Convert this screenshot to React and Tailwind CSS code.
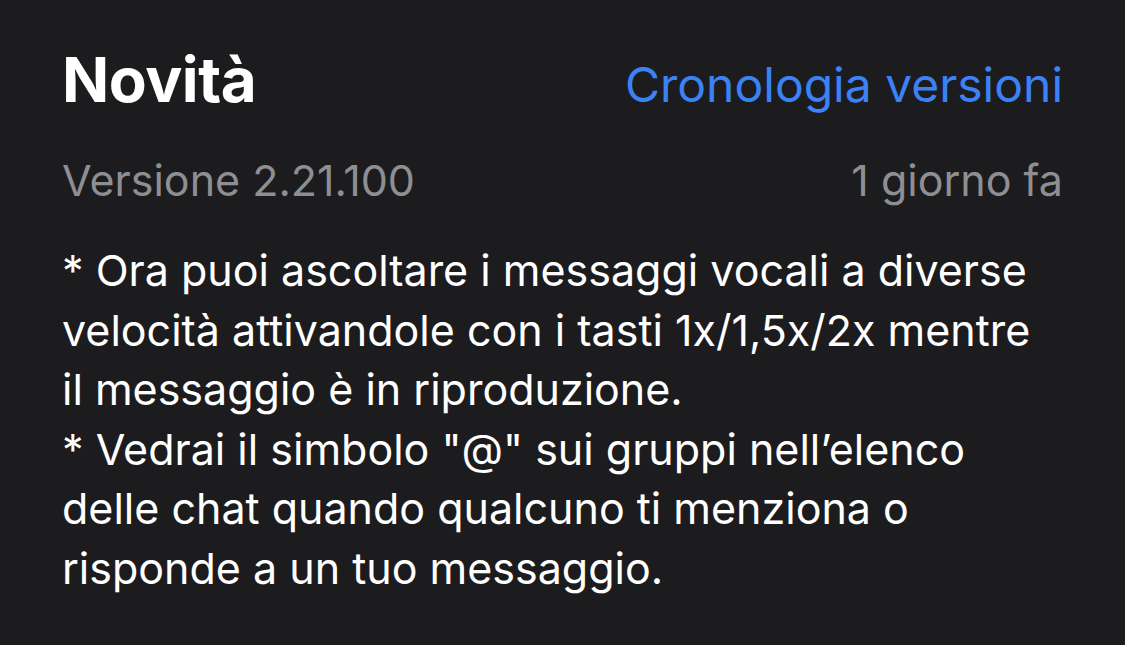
export default function App() {
  return (
    <div className="w-[1125px] h-[645px] bg-[#1c1c1e] text-white px-[62px] overflow-hidden" style={{ fontFamily: 'Inter, "Noto Sans", sans-serif' }}>
      <div className="flex items-baseline justify-between pt-[42px]">
        <div className="text-[62px] font-bold leading-[76px] tracking-[-0.5px]">Novità</div>
        <div className="text-[48px] leading-[60px] text-[#3b82f6]">Cronologia versioni</div>
      </div>
      <div className="flex items-baseline justify-between mt-[37px] text-[#8e8e93] text-[43px] leading-[50px]">
        <div>Versione 2.21.100</div>
        <div>1 giorno fa</div>
      </div>
      <div className="mt-[36px] text-[43px] leading-[59.5px]">
        <div>* Ora puoi ascoltare i messaggi vocali a diverse</div>
        <div>velocità attivandole con i tasti 1x/1,5x/2x mentre</div>
        <div>il messaggio è in riproduzione.</div>
        <div>* Vedrai il simbolo "@" sui gruppi nell’elenco</div>
        <div>delle chat quando qualcuno ti menziona o</div>
        <div>risponde a un tuo messaggio.</div>
      </div>
    </div>
  );
}
